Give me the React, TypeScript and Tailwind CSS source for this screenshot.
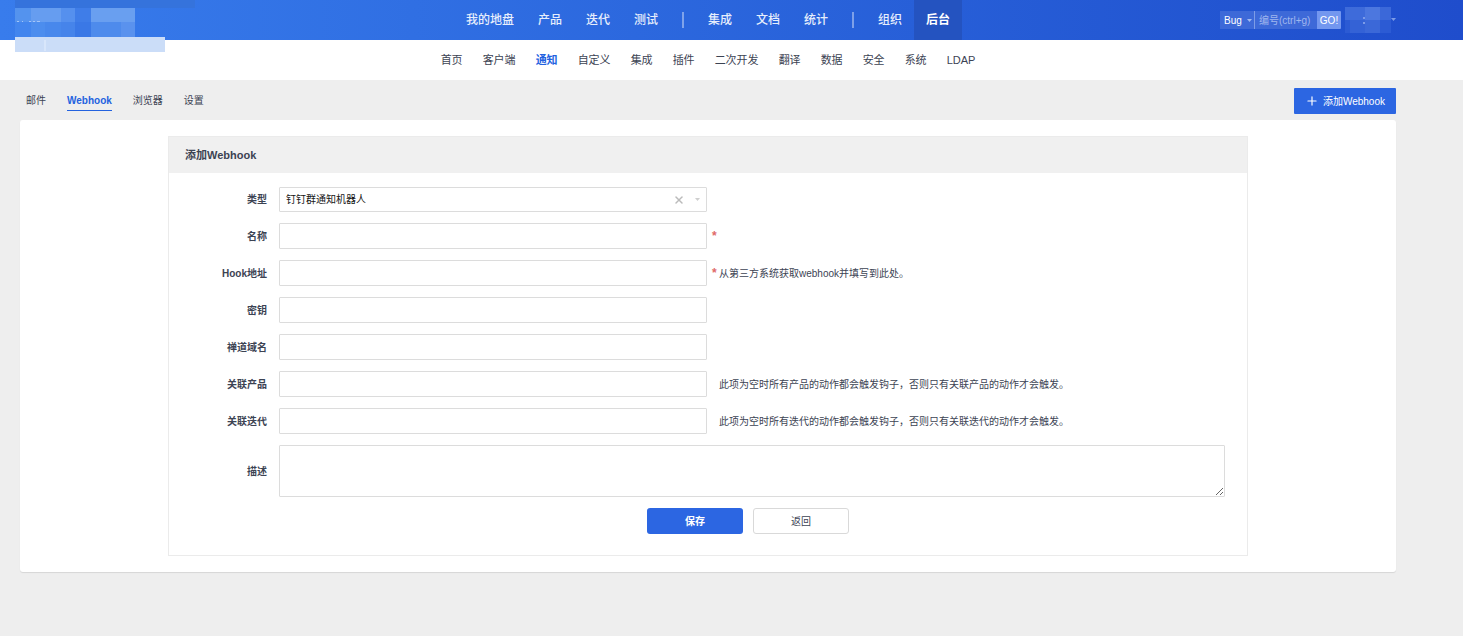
import { Plus, X } from "lucide-react"
import { useState } from "react"
import type { ReactNode } from "react"

type Item = { label: string; active?: boolean }

const mainNav: Item[][] = [
  [{ label: "我的地盘" }, { label: "产品" }, { label: "迭代" }, { label: "测试" }],
  [{ label: "集成" }, { label: "文档" }, { label: "统计" }],
  [{ label: "组织" }, { label: "后台", active: true }],
]

const subNav: Item[] = [
  { label: "首页" },
  { label: "客户端" },
  { label: "通知", active: true },
  { label: "自定义" },
  { label: "集成" },
  { label: "插件" },
  { label: "二次开发" },
  { label: "翻译" },
  { label: "数据" },
  { label: "安全" },
  { label: "系统" },
  { label: "LDAP" },
]

const tabs: Item[] = [{ label: "邮件" }, { label: "Webhook", active: true }, { label: "浏览器" }, { label: "设置" }]

const fieldClass =
  "w-full rounded-[1px] border border-[#dcdcdc] bg-white px-1.5 text-[10px] text-[#141414] outline-none focus:border-[#2c66e2]"
const inputClass = `h-[26px] ${fieldClass}`

// Company name, masked with a mosaic
function LogoMosaic() {
  return (
    <svg className="absolute top-0 left-0" width="200" height="52" viewBox="0 0 200 52" shapeRendering="crispEdges" aria-hidden="true">
      <rect x="15" y="0" width="180" height="8" fill="#3573dc" />
      <rect x="15" y="8" width="16" height="14" fill="#5493ee" />
      <rect x="31" y="8" width="30" height="14" fill="#669df0" />
      <rect x="61" y="8" width="14" height="14" fill="#5590ee" />
      <rect x="75" y="8" width="16" height="14" fill="#3f7de8" />
      <rect x="91" y="8" width="44" height="14" fill="#699ff0" />
      <rect x="15" y="22" width="16" height="15" fill="#4285ee" />
      <rect x="31" y="22" width="14" height="15" fill="#4c8dee" />
      <rect x="45" y="22" width="16" height="15" fill="#4888ec" />
      <rect x="61" y="22" width="14" height="15" fill="#4684ea" />
      <rect x="75" y="22" width="16" height="15" fill="#3a78e6" />
      <rect x="91" y="22" width="30" height="15" fill="#4e8bec" />
      <rect x="121" y="22" width="14" height="15" fill="#5a92ee" />
      <path d="M17 21.500h2M22 21.500h1M29 21.500h2M33 21.500h2M37 21.500h3" stroke="#a5c6f8" />
      <rect x="15" y="37" width="150" height="15" fill="#cbddf8" />
      <rect x="44" y="40" width="2" height="11" fill="#d8e6fb" />
    </svg>
  )
}

function UserMosaic() {
  return (
    <svg width="46" height="26" viewBox="0 0 46 26" shapeRendering="crispEdges" aria-hidden="true">
      <rect width="46" height="26" fill="#2c5bd4" />
      <rect width="20" height="13" fill="#3e6bda" />
      <rect x="20" width="15" height="13" fill="#4c77df" />
      <rect x="35" width="11" height="13" fill="#3b68d9" />
      <rect x="5" y="13" width="15" height="13" fill="#3462d6" />
      <rect x="20" y="13" width="15" height="13" fill="#3b68d8" />
      <rect x="18" y="10" width="2" height="2" fill="#7c9be8" />
      <rect x="18" y="15" width="2" height="2" fill="#7c9be8" />
    </svg>
  )
}

function Caret({ className }: { className: string }) {
  return (
    <svg width="5" height="3" viewBox="0 0 5 3" className={className} aria-hidden="true">
      <path d="M0 0h5L2.5 3z" fill="currentColor" />
    </svg>
  )
}

function Header() {
  return (
    <header className="relative bg-linear-to-r from-[#387cec] to-[#1f4dcc]">
      <LogoMosaic />
      <div className="grid h-10 grid-cols-[1fr_auto_1fr] pr-[67px] pl-5">
        <div />
        <nav className="flex text-[12px]">
          {mainNav.map((group, i) => (
            <div key={i} className="flex items-center">
              {i > 0 && <span className="mx-3 h-4 w-0.5 bg-white/40" />}
              {group.map((item) => (
                <a
                  key={item.label}
                  href="#"
                  className={
                    item.active
                      ? "flex h-10 items-center bg-[#2453c0] px-3 font-bold text-white"
                      : "flex h-10 items-center px-3 font-medium text-[#e6eefc]"
                  }
                >
                  {item.label}
                </a>
              ))}
            </div>
          ))}
        </nav>
        <div className="flex items-center justify-end">
          <form className="flex h-[18px] text-[10px]" onSubmit={(e) => e.preventDefault()}>
            <button type="button" className="flex w-[35px] items-center justify-between border-r border-[#7d9ce6] bg-[#3d69d8] pr-0.5 pl-1 text-white">
              Bug
              <Caret className="text-[#a3baf0]" />
            </button>
            <input
              aria-label="编号"
              placeholder="编号(ctrl+g)"
              className="w-[62px] bg-[#3d69d8] px-1 text-white outline-none placeholder:text-[#a0b7ee]"
            />
            <button type="submit" className="w-6 rounded-r-[1px] bg-[#7397ef] text-white">
              GO!
            </button>
          </form>
          <button type="button" aria-label="用户" className="ml-1 flex items-center">
            <UserMosaic />
            <Caret className="mb-0.5 text-[#7d9ce6]" />
          </button>
        </div>
      </div>
    </header>
  )
}

type RowProps = { label: string; id: string; required?: boolean; hint?: string; children: ReactNode }

function Row({ label, id, required, hint, children }: RowProps) {
  return (
    <div className="flex items-center">
      <label htmlFor={id} className="w-[99px] shrink-0 pr-3 text-right font-bold">
        {label}
      </label>
      <div className="w-[428px] shrink-0">{children}</div>
      <span className="w-3 shrink-0 pl-[5px] text-[12px] leading-3 font-bold text-[#e06a6a]">{required && "*"}</span>
      {hint && <span>{hint}</span>}
    </div>
  )
}

export default function App() {
  const [type, setType] = useState("dinggroup")

  return (
    <div className="min-h-screen bg-[#eeeeee] font-['Liberation_Sans','Noto_Sans_CJK_SC',sans-serif] text-[10px] text-[#3c4353]">
      <Header />

      <nav className="flex h-10 items-center justify-center gap-5 bg-white pr-[67px] pl-5 text-[11px]">
        {subNav.map((item) => (
          <a key={item.label} href="#" className={item.active ? "font-bold text-[#2362df]" : ""}>
            {item.label}
          </a>
        ))}
      </nav>

      <main className="pr-[67px] pb-8 pl-5">
        <div className="flex h-10 items-center justify-between pt-0.5">
          <nav className="flex gap-[21px] pl-1.5">
            {tabs.map((tab) => (
              <a
                key={tab.label}
                href="#"
                className={
                  tab.active
                    ? "border-b border-[#2362df] leading-[19px] font-bold text-[#2362df]"
                    : "border-b border-transparent leading-[19px]"
                }
              >
                {tab.label}
              </a>
            ))}
          </nav>
          <button type="button" className="flex h-[26px] items-center gap-1 rounded-[1px] bg-[#2c66e2] px-[11px] text-white">
            <Plus size={14} strokeWidth={2} />
            添加Webhook
          </button>
        </div>

        <div className="rounded-[3px] bg-white py-4 shadow-[0_1px_1px_rgba(0,0,0,0.1)]">
          <section className="mx-auto max-w-[1080px] border border-[#ebebeb]">
            <h2 className="flex h-9 items-center bg-[#f0f0f0] px-4 text-[11px] font-bold">添加Webhook</h2>
            <form className="flex flex-col gap-[11px] pt-3.5 pr-[22px] pb-[21px] pl-[11px]" onSubmit={(e) => e.preventDefault()}>
              <Row label="类型" id="type">
                <div className="relative">
                  <select
                    id="type"
                    value={type}
                    onChange={(e) => setType(e.target.value)}
                    className={`block h-[25px] appearance-none ${fieldClass}`}
                  >
                    <option value="" />
                    <option value="dinggroup">钉钉群通知机器人</option>
                  </select>
                  <button type="button" aria-label="清除" className="absolute top-[7px] right-[22px] text-[#bbbbbb]" onClick={() => setType("")}>
                    <X size={12} strokeWidth={3} />
                  </button>
                  <span className="pointer-events-none absolute top-[11px] right-[7px]">
                    <Caret className="text-[#cfcfcf]" />
                  </span>
                </div>
              </Row>
              <Row label="名称" id="name" required>
                <input id="name" className={inputClass} />
              </Row>
              <Row label="Hook地址" id="url" required hint="从第三方系统获取webhook并填写到此处。">
                <input id="url" className={inputClass} />
              </Row>
              <Row label="密钥" id="secret">
                <input id="secret" className={inputClass} />
              </Row>
              <Row label="禅道域名" id="domain">
                <input id="domain" className={inputClass} />
              </Row>
              <Row label="关联产品" id="products" hint="此项为空时所有产品的动作都会触发钩子，否则只有关联产品的动作才会触发。">
                <input id="products" className={inputClass} />
              </Row>
              <Row label="关联迭代" id="executions" hint="此项为空时所有迭代的动作都会触发钩子，否则只有关联迭代的动作才会触发。">
                <input id="executions" className={inputClass} />
              </Row>
              <div className="flex items-center">
                <label htmlFor="desc" className="w-[99px] shrink-0 pr-3 text-right font-bold">
                  描述
                </label>
                <textarea id="desc" className="block h-[52px] flex-1 rounded-[1px] border border-[#dcdcdc] px-1.5 outline-none" />
              </div>
              <div className="flex justify-center gap-2.5 pl-[91px]">
                <button type="submit" className="h-[26px] w-24 rounded-[3px] bg-[#2c66e2] font-bold text-white">
                  保存
                </button>
                <button type="button" className="h-[26px] w-24 rounded-[3px] border border-[#d9d9d9] bg-white">
                  返回
                </button>
              </div>
            </form>
          </section>
        </div>
      </main>
    </div>
  )
}
